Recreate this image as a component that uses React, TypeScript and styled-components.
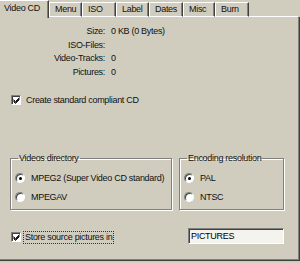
import styled, { createGlobalStyle } from "styled-components"

const GlobalStyle = createGlobalStyle`
    html, body {
        margin: 0;
        padding: 0;
        background: #d0cdbf;
    }
`

const tabs = ["Video CD", "Menu", "ISO", "Label", "Dates", "Misc", "Burn"]
const tabWidths = [49, 33, 34, 33, 34, 32, 34]

const info = [
    { label: "Size:", value: "0 KB (0 Bytes)" },
    { label: "ISO-Files:", value: "" },
    { label: "Video-Tracks:", value: "0" },
    { label: "Pictures:", value: "0" },
]

function CheckMark() {
    return (
        <svg width="7" height="7" viewBox="0 0 7 7">
            <path d="M0.5 2.5 L2.5 4.5 L6.5 0.5 M0.5 3.5 L2.5 5.5 L6.5 1.5 M0.5 4.5 L2.5 6.5 L6.5 2.5" stroke="#000" strokeWidth="0.9" fill="none" />
        </svg>
    )
}

export default function App() {
    return (
        <>
            <GlobalStyle />
            <Window>
                <TabBar>
                    {tabs.map((t, i) => (
                        <Tab key={t} $active={i === 0} $width={tabWidths[i]}>{t}</Tab>
                    ))}
                    <TabFill />
                </TabBar>
                <Panel>
                    <InfoGrid>
                        {info.map(row => (
                            <InfoRow key={row.label}>
                                <InfoLabel>{row.label}</InfoLabel>
                                <InfoValue>{row.value}</InfoValue>
                            </InfoRow>
                        ))}
                    </InfoGrid>
                    <CheckRow $top={15}>
                        <CheckBox><CheckMark /></CheckBox>
                        <span>Create standard compliant CD</span>
                    </CheckRow>
                    <Groups>
                        <Group $width={162}>
                            <Legend>Videos directory</Legend>
                            <RadioRow>
                                <Radio $checked />
                                <span>MPEG2 (Super Video CD standard)</span>
                            </RadioRow>
                            <RadioRow>
                                <Radio />
                                <span>MPEGAV</span>
                            </RadioRow>
                        </Group>
                        <Group $width={105}>
                            <Legend>Encoding resolution</Legend>
                            <RadioRow>
                                <Radio $checked />
                                <span>PAL</span>
                            </RadioRow>
                            <RadioRow>
                                <Radio />
                                <span>NTSC</span>
                            </RadioRow>
                        </Group>
                    </Groups>
                    <BottomRow>
                        <CheckRow $top={2}>
                            <CheckBox><CheckMark /></CheckBox>
                            <FocusLabel>Store source pictures in</FocusLabel>
                        </CheckRow>
                        <TextInput defaultValue="PICTURES" />
                    </BottomRow>
                </Panel>
            </Window>
        </>
    )
}

const font = `"Liberation Sans", Arial, sans-serif`

const Window = styled.div`
    width: 300px;
    height: 263px;
    overflow: hidden;
    background: #d0cdbf;
    font-family: ${font};
    font-size: 9px;
    letter-spacing: -0.3px;
    color: #111;
    display: flex;
    flex-direction: column;
`
const TabBar = styled.div`
    height: 17px;
    display: flex;
    align-items: flex-end;
    position: relative;
    z-index: 1;
`
const Tab = styled.div<{ $active?: boolean; $width: number }>`
    box-sizing: border-box;
    width: ${p => p.$width}px;
    height: ${p => (p.$active ? 18 : 15)}px;
    margin-bottom: ${p => (p.$active ? -1 : 0)}px;
    padding: ${p => (p.$active ? "2px 0 0 4px" : "1px 0 0 5px")};
    border-top: 1px solid #ffffff;
    border-left: ${p => (p.$active ? "none" : "1px solid #ffffff")};
    border-right: 1px solid #404040;
    box-shadow: inset -1px 0 #808080;
    border-bottom: ${p => (p.$active ? "none" : "1px solid #ffffff")};
    background: #d0cdbf;
    white-space: nowrap;
    line-height: 10px;
`
const TabFill = styled.div`
    flex: 1;
    height: 1px;
    background: #ffffff;
    margin-right: 2px;
`
const Panel = styled.div`
    flex: 1;
    box-sizing: border-box;
    border-right: 1px solid #404040;
    border-bottom: 1px solid #404040;
    box-shadow: inset -1px -1px #808080;
    margin-bottom: 2px;
    padding: 7px 0 0 0;
    display: flex;
    flex-direction: column;
`
const InfoGrid = styled.div`
    display: flex;
    flex-direction: column;
`
const InfoRow = styled.div`
    display: grid;
    grid-template-columns: 105px auto;
    column-gap: 6px;
    height: 13.5px;
    line-height: 14px;
`
const InfoLabel = styled.span`
    text-align: right;
`
const InfoValue = styled.span``
const CheckRow = styled.label<{ $top: number }>`
    display: flex;
    align-items: center;
    gap: 5px;
    margin-top: ${p => p.$top}px;
    padding-left: 11px;
    height: 14px;
    white-space: nowrap;
`
const CheckBox = styled.span`
    box-sizing: border-box;
    width: 10px;
    height: 10px;
    background: #ffffff;
    border-top: 1px solid #808080;
    border-left: 1px solid #808080;
    border-right: 1px solid #ffffff;
    border-bottom: 1px solid #ffffff;
    box-shadow: inset 1px 1px #404040;
    display: flex;
    align-items: center;
    justify-content: center;
    padding: 1px 0 0 1px;
`
const Groups = styled.div`
    display: flex;
    gap: 7px;
    margin-top: 46px;
    padding-left: 10px;
`
const Group = styled.fieldset<{ $width: number }>`
    box-sizing: border-box;
    width: ${p => p.$width}px;
    height: 57px;
    margin: 0;
    padding: 8px 0 0 4px;
    border: 1px solid #808080;
    box-shadow: inset 1px 1px #ffffff, 1px 1px #ffffff;
    display: flex;
    flex-direction: column;
    gap: 5px;
`
const Legend = styled.legend`
    padding: 0 1px;
    margin-left: 3px;
    line-height: 10px;
    white-space: nowrap;
`
const RadioRow = styled.label`
    display: flex;
    align-items: center;
    gap: 6px;
    height: 14px;
    white-space: nowrap;
`
const Radio = styled.span<{ $checked?: boolean }>`
    box-sizing: border-box;
    width: 10px;
    height: 10px;
    border-radius: 50%;
    background: #ffffff;
    border: 1px solid;
    border-color: #808080 #ffffff #ffffff #808080;
    box-shadow: inset 1px 1px #404040;
    display: flex;
    align-items: center;
    justify-content: center;
    &::after {
        content: "";
        width: 3px;
        height: 3px;
        border-radius: 50%;
        background: ${p => (p.$checked ? "#000" : "transparent")};
    }
`
const BottomRow = styled.div`
    display: flex;
    align-items: center;
    justify-content: space-between;
    margin-top: 18px;
    padding-right: 15px;
`
const FocusLabel = styled.span`
    outline: 1px dotted #333;
    outline-offset: 0;
    padding: 0 1px;
    margin-left: -2px;
    line-height: 11px;
`
const TextInput = styled.input`
    box-sizing: border-box;
    width: 96px;
    height: 16px;
    padding: 0 2px;
    background: #f4f3ee;
    border-top: 1px solid #808080;
    border-left: 1px solid #808080;
    border-right: 1px solid #ffffff;
    border-bottom: 1px solid #ffffff;
    box-shadow: inset 1px 1px #404040;
    font-family: ${font};
    font-size: 9px;
    letter-spacing: -0.3px;
    color: #000;
    outline: none;
`
